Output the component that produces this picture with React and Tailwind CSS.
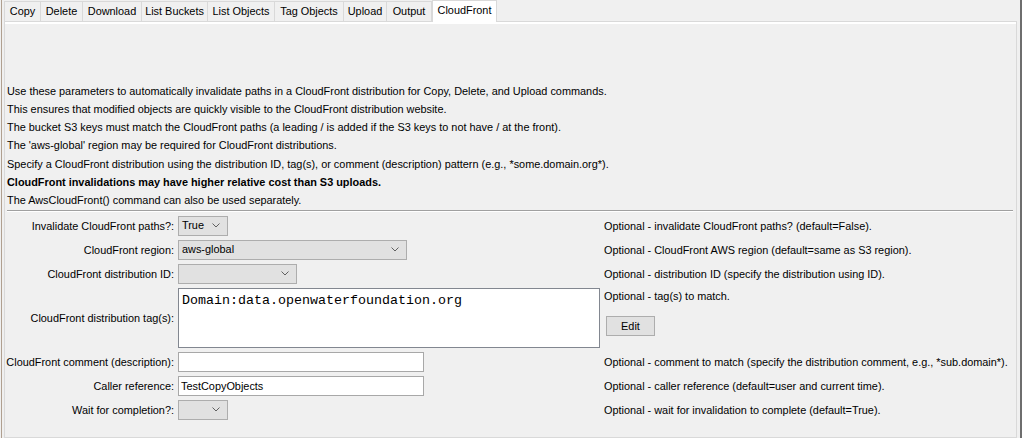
import React from "react";

const tabs = [
  ["Copy", 37],
  ["Delete", 42],
  ["Download", 59],
  ["List Buckets", 66],
  ["List Objects", 67],
  ["Tag Objects", 69],
  ["Upload", 43],
  ["Output", 45],
];

function Chevron() {
  return (
    <svg width="8" height="5" viewBox="0 0 8 5" className="shrink-0">
      <path d="M0.5 0.5 L4 4 L7.5 0.5" fill="none" stroke="#606060" strokeWidth="1" />
    </svg>
  );
}

function Select({ width, value }) {
  return (
    <div
      className="h-[20px] border border-[#adadad] bg-[#e1e1e1] flex items-center justify-between pl-[3px] pr-[7px]"
      style={{ width }}
    >
      <span className="leading-none">{value}</span>
      <Chevron />
    </div>
  );
}

function Input({ value }) {
  return (
    <div className="h-[20px] w-[246px] border border-[#a8a8a8] bg-white flex items-center pl-[2px]">
      <span>{value}</span>
    </div>
  );
}

function Row({ label, children, desc, h = "h-[20px]" }) {
  return (
    <div className={`flex ${h}`}>
      <div className="w-[169px] shrink-0 flex items-center justify-end whitespace-nowrap">{label}</div>
      <div className="w-[426px] shrink-0 pl-[4px] flex items-start">{children}</div>
      <div className="pl-[4px] flex items-center whitespace-nowrap">{desc}</div>
    </div>
  );
}

export default function App() {
  return (
    <div
      className="w-[1022px] h-[438px] bg-[#f0f0f0] relative overflow-hidden text-[10.9px] text-black"
      style={{ fontFamily: '"Liberation Sans", Arial, sans-serif' }}
    >
      <div className="flex h-full">
        <div className="w-[1px] bg-[#b0a090] ml-[1px]" />
        <div className="w-[2px]" />
        <div className="flex-1 flex flex-col">
          {/* tabs */}
          <div className="flex h-[21px] items-end">
            {tabs.map(([t, w], i) => (
              <div
                key={t}
                className={`h-[20px] flex items-center justify-center border-t border-r border-[#d9d9d9] bg-[#f0f0f0] whitespace-nowrap ${i === 0 ? "border-l" : ""}`}
                style={{ width: w }}
              >
                {t}
              </div>
            ))}
            <div className="h-[22px] w-[65px] bg-white border-t border-l border-r border-[#d9d9d9] flex items-center justify-center -mb-[1px] relative z-10 pb-[2px]">
              CloudFront
            </div>
          </div>
          {/* panel */}
          <div className="w-[1013px] flex-1 border border-[#d9d9d9] bg-[#f0f0f0] flex flex-col">
            <div className="h-[2px] bg-white" />
            <div className="pl-[2px] pt-[57.5px] leading-[18.33px]">
              <div>Use these parameters to automatically invalidate paths in a CloudFront distribution for Copy, Delete, and Upload commands.</div>
              <div>This ensures that modified objects are quickly visible to the CloudFront distribution website.</div>
              <div>The bucket S3 keys must match the CloudFront paths (a leading / is added if the S3 keys to not have / at the front).</div>
              <div>The 'aws-global' region may be required for CloudFront distributions.</div>
              <div>Specify a CloudFront distribution using the distribution ID, tag(s), or comment (description) pattern (e.g., *some.domain.org*).</div>
              <div className="font-bold">CloudFront invalidations may have higher relative cost than S3 uploads.</div>
              <div>The AwsCloudFront() command can also be used separately.</div>
            </div>
            <div className="mx-[2px] w-[1006px] border-t border-[#a0a0a0] border-b border-b-white" />
            <div className="mt-[4px] flex flex-col gap-[4px]">
              <Row label="Invalidate CloudFront paths?:" desc="Optional - invalidate CloudFront paths? (default=False).">
                <Select width={50} value="True" />
              </Row>
              <Row label="CloudFront region:" desc="Optional - CloudFront AWS region (default=same as S3 region).">
                <Select width={229} value="aws-global" />
              </Row>
              <Row label="CloudFront distribution ID:" desc="Optional - distribution ID (specify the distribution using ID).">
                <Select width={119} value="" />
              </Row>
              <div className="flex h-[60px]">
                <div className="w-[169px] shrink-0 flex items-center justify-end whitespace-nowrap">CloudFront distribution tag(s):</div>
                <div className="w-[426px] shrink-0 pl-[4px]">
                  <div
                    className="w-[422px] h-[60px] border border-[#828790] bg-white pl-[3px] pt-[4px] text-[13.33px] leading-[16px]"
                    style={{ fontFamily: '"Liberation Mono", "Courier New", monospace' }}
                  >
                    Domain:data.openwaterfoundation.org
                  </div>
                </div>
                <div className="pl-[4px] flex flex-col">
                  <div className="h-[16px] flex items-center">Optional - tag(s) to match.</div>
                  <div className="mt-[12px] ml-[2px] w-[49px] h-[20px] border border-[#adadad] bg-[#e1e1e1] flex items-center justify-center">
                    Edit
                  </div>
                </div>
              </div>
              <Row label="CloudFront comment (description):" desc="Optional - comment to match (specify the distribution comment, e.g., *sub.domain*).">
                <Input value="" />
              </Row>
              <Row label="Caller reference:" desc="Optional - caller reference (default=user and current time).">
                <Input value="TestCopyObjects" />
              </Row>
              <Row label="Wait for completion?:" desc="Optional - wait for invalidation to complete (default=True).">
                <Select width={50} value="" />
              </Row>
            </div>
          </div>
        </div>
        <div className="w-[3px]" />
        <div className="w-[2px] bg-[#6e6e6e]" />
      </div>
    </div>
  );
}
